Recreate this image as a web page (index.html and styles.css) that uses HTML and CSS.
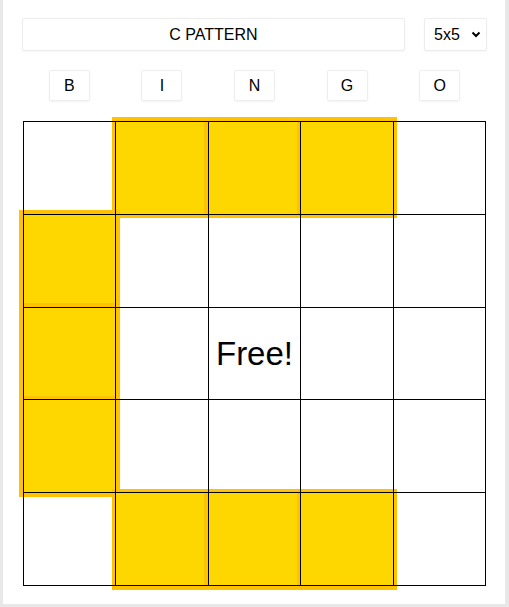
FILE: index.html
```html
<!DOCTYPE html>
<html lang="en">
<head>
<meta charset="utf-8">
<title>Bingo Pattern</title>
<link rel="stylesheet" href="styles.css">
</head>
<body>
<main class="panel">
  <div class="toolbar">
    <div class="title">C PATTERN</div>
    <div class="size-select">
      <span>5x5</span>
      <svg class="chevron" width="10" height="7" viewBox="0 0 10 7"><polyline points="1.5,1.5 5,5 8.5,1.5" fill="none" stroke="#000" stroke-width="2"/></svg>
    </div>
  </div>
  <div class="letters">
    <div class="letter"><span>B</span></div>
    <div class="letter"><span>I</span></div>
    <div class="letter"><span>N</span></div>
    <div class="letter"><span>G</span></div>
    <div class="letter"><span>O</span></div>
  </div>
  <div class="board">
    <div class="cell"></div><div class="cell on"></div><div class="cell on"></div><div class="cell on"></div><div class="cell"></div>
    <div class="cell on"></div><div class="cell"></div><div class="cell"></div><div class="cell"></div><div class="cell"></div>
    <div class="cell on"></div><div class="cell"></div><div class="cell free">Free!</div><div class="cell"></div><div class="cell"></div>
    <div class="cell on"></div><div class="cell"></div><div class="cell"></div><div class="cell"></div><div class="cell"></div>
    <div class="cell"></div><div class="cell on"></div><div class="cell on"></div><div class="cell on"></div><div class="cell"></div>
    <svg class="lines" viewBox="0 0 463 465" preserveAspectRatio="none" shape-rendering="crispEdges">
      <g stroke="#000" stroke-width="1">
        <line x1="0.5" y1="0" x2="0.5" y2="465"/>
        <line x1="92.9" y1="0" x2="92.9" y2="465"/>
        <line x1="185.3" y1="0" x2="185.3" y2="465"/>
        <line x1="277.7" y1="0" x2="277.7" y2="465"/>
        <line x1="370.1" y1="0" x2="370.1" y2="465"/>
        <line x1="462.5" y1="0" x2="462.5" y2="465"/>
        <line x1="0" y1="0.5" x2="463" y2="0.5"/>
        <line x1="0" y1="93.3" x2="463" y2="93.3"/>
        <line x1="0" y1="186.1" x2="463" y2="186.1"/>
        <line x1="0" y1="278.9" x2="463" y2="278.9"/>
        <line x1="0" y1="371.7" x2="463" y2="371.7"/>
        <line x1="0" y1="464.5" x2="463" y2="464.5"/>
      </g>
    </svg>
  </div>
</main>
</body>
</html>
```

FILE: styles.css
```css
html, body {
  margin: 0;
  padding: 0;
}
body {
  background: #e8e8e8;
  font-family: "Liberation Sans", Arial, sans-serif;
  color: #000;
}
.panel {
  margin-left: 3px;
  width: 502px;
  height: 604px;
  background: #fff;
  box-sizing: border-box;
  padding: 18px 18px 0 19px;
}
.toolbar {
  display: flex;
  gap: 19px;
  height: 33px;
}
.title {
  flex: 1;
  display: flex;
  align-items: center;
  justify-content: center;
  font-size: 16px;
  border: 1px solid #ececec;
  border-radius: 2px;
  box-shadow: 0 1px 2px rgba(0,0,0,0.04);
}
.size-select {
  width: 63px;
  box-sizing: border-box;
  display: flex;
  align-items: center;
  justify-content: space-between;
  padding: 0 5px 0 9px;
  font-size: 16px;
  border: 1px solid #ececec;
  border-radius: 2px;
  box-shadow: 0 1px 2px rgba(0,0,0,0.04);
}
.chevron {
  display: block;
}
.letters {
  display: grid;
  grid-template-columns: repeat(5, 1fr);
  width: 463px;
  margin: 19px auto 0;
  justify-items: center;
}
.letter {
  width: 41px;
  height: 31px;
  box-sizing: border-box;
  display: flex;
  align-items: center;
  justify-content: center;
  font-size: 16px;
  border: 1px solid #eeeeee;
  border-radius: 2px;
  box-shadow: 0 1px 2px rgba(0,0,0,0.05);
}
.board {
  position: relative;
  display: grid;
  grid-template-columns: repeat(5, 1fr);
  grid-template-rows: repeat(5, 1fr);
  width: 463px;
  height: 465px;
  margin: 20px auto 0;
}
.cell {
  position: relative;
  display: flex;
  align-items: center;
  justify-content: center;
}
.cell.on {
  background: #ffd700;
}
.cell.on::before {
  content: "";
  position: absolute;
  top: -4px;
  left: -4px;
  right: -4px;
  bottom: -4px;
  border: 4px solid #ffc200;
}
.cell.free {
  font-size: 33px;
}
.lines {
  position: absolute;
  inset: 0;
  width: 100%;
  height: 100%;
  pointer-events: none;
}
```
